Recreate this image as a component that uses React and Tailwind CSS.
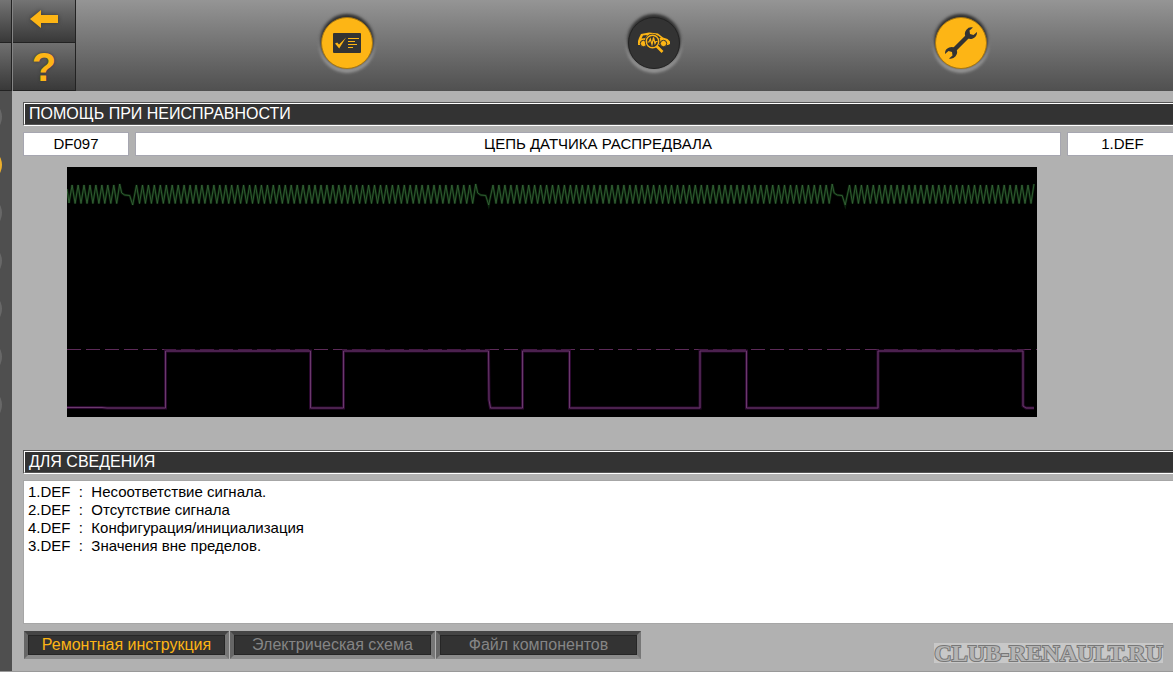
import { useState } from "react"

const codes = [
  { id: "1.DEF", text: "Несоответствие сигнала." },
  { id: "2.DEF", text: "Отсутствие сигнала" },
  { id: "4.DEF", text: "Конфигурация/инициализация" },
  { id: "3.DEF", text: "Значения вне пределов." }
]

const tabs = ["Ремонтная инструкция", "Электрическая схема", "Файл компонентов"]

const steps = [1, 2, 3, 4, 5, 6, 7]

// crankshaft signal: 60 teeth per turn, two of them missing
const buildCrank = () => {
  const pts = []
  const tooth = 5.95
  const addTeeth = (from, count) => {
    for (let i = 0; i < count; i++) {
      const x = from + i * tooth
      pts.push([x, i === count - 1 ? 17 : 18])
      if (i < count - 1) pts.push([x + tooth / 2, 36.5])
    }
  }
  const addGap = (x) => {
    pts.push([x + 2, 26], [x + 5, 28], [x + 10, 28.5], [x + 13, 38])
  }

  pts.push([0, 22], [2, 36])
  addTeeth(5.1, 9)
  addGap(52.7)
  addTeeth(69.5, 58)
  addGap(408.7)
  addTeeth(426, 58)
  addGap(765.2)
  addTeeth(782.5, 32)
  return pts.map((p) => p.map((n) => n.toFixed(1)).join(",")).join(" ")
}

const crank = buildCrank()

const cam =
  "M0 240.5H35L40 241H98.5V184H243.5V241H276.5V184H421.5L422 233L423.5 241H455.5V184H502.5V241H633V184H679.5V241H811V184H956V239L959 241H967"

function Scope() {
  return (
    <svg
      className="block h-[250px] w-full bg-black"
      viewBox="0 0 970 250"
      preserveAspectRatio="none"
      role="img"
      aria-label="Осциллограмма"
    >
      <polyline points={crank} fill="none" stroke="#103814" strokeWidth="2.4" opacity="0.6" />
      <polyline points={crank} fill="none" stroke="#38693a" strokeWidth="0.8" />
      <path d="M0 182.5H970" stroke="#5c2a58" strokeWidth="1" strokeDasharray="14 5" />
      <path d={cam} fill="none" stroke="#2c0830" strokeWidth="3" />
      <path d={cam} fill="none" stroke="#6a3a6c" strokeWidth="1" />
    </svg>
  )
}

function SectionTitle({ children }) {
  return (
    <div className="border border-r-0 border-[#555] border-b-white">
      <h2 className="h-[22px] border-t border-l border-b border-t-white border-l-white border-b-[#555] bg-[#333] pl-1 text-[16px] leading-[20px] text-white">
        {children}
      </h2>
    </div>
  )
}

function ListIcon() {
  return (
    <svg className="h-5 w-7" viewBox="0 0 28 20">
      <rect width="28" height="20" rx="1" fill="#333" />
      <path d="M2 10.5L4.2 9.6L6 11.6L13 4.5L6.2 15.5Z" fill="#fdb515" />
      <path d="M15 5.5H26M15 8.5H22M15 11.5H24M15 14.5H20" stroke="#fdb515" strokeWidth="1" />
    </svg>
  )
}

function CarIcon() {
  return (
    <svg className="h-6 w-8" viewBox="0 0 32 24">
      <path
        d="M0 14V10L1 7L3 3L11 1.5L20 2.5L25 6.5L29.5 8L32 10.5V13L30 14H2Z"
        fill="#fdb515"
      />
      <path d="M3.5 7.5L5 4.5L9 4L7.5 7Z" fill="#333" />
      <path d="M19.5 4L23 7H20Z" fill="#333" />
      <circle cx="5.5" cy="12.5" r="3.2" fill="#fdb515" stroke="#333" />
      <circle cx="25.5" cy="12.5" r="3.2" fill="#fdb515" stroke="#333" />
      <circle cx="14.5" cy="10.5" r="7.8" fill="#333" />
      <circle cx="14.5" cy="10.5" r="6.2" fill="#333" stroke="#fdb515" strokeWidth="1.4" />
      <path d="M9.5 11H11L12.3 8L14 13.5L15.5 6.5L17 12.5L18 10.5H19.5" fill="none" stroke="#fdb515" strokeWidth="1.2" />
      <path d="M18.5 15L24.5 21" stroke="#fdb515" strokeWidth="2.6" />
    </svg>
  )
}

function WrenchIcon() {
  return (
    <svg className="h-8 w-8" viewBox="0 0 32 32">
      <path d="M8 24L24.5 7.5" stroke="#333" strokeWidth="4.4" />
      <path
        d="M28 0.5A6.5 6.5 0 0 0 20.5 9.5A6.5 6.5 0 0 0 32 5L28.5 8L25 7L24.5 3.5Z"
        fill="#333"
      />
      <path
        d="M4 31.5A6.5 6.5 0 0 0 11.5 22.5A6.5 6.5 0 0 0 0 27L3.5 24L7 25L7.5 28.5Z"
        fill="#333"
      />
    </svg>
  )
}

function RoundButton({ label, dark, children }) {
  return (
    <button
      aria-label={label}
      className={`flex size-[52px] items-center justify-center rounded-full border shadow-[0_-2px_3px_1px_#303030,0_2px_3px_2px_#959595] ${
        dark ? "border-[#222] bg-[#333]" : "border-[#a87812] bg-[#fdb515]"
      }`}
    >
      {children}
    </button>
  )
}

function App() {
  const [tab, setTab] = useState(0)

  return (
    <div className="bg-white font-['Liberation_Sans',Arial,sans-serif] text-black">
      <header className="flex h-[91px] bg-linear-to-b from-[#959595] to-[#505050]">
        <div className="flex w-3 flex-col border-r border-[#222]">
          <div className="h-[43px] border-b border-[#222] bg-linear-to-b from-[#747474] to-[#393939]" />
          <div className="h-12 border-b border-[#222] bg-linear-to-b from-[#707070] to-[#393939]" />
        </div>
        <div className="flex w-16 flex-col border-r border-l border-r-[#222] border-l-[#858585]">
          <button
            aria-label="Назад"
            className="flex h-[43px] items-center justify-center border-b border-[#222] bg-linear-to-b from-[#747474] to-[#393939] pb-1"
          >
            <svg className="h-[18px] w-7 drop-shadow-[0_0_2px_#333]" viewBox="0 0 28 18">
              <path d="M0 9L11 0V5H28V13H11V18Z" fill="#fdb515" />
            </svg>
          </button>
          <button
            aria-label="Справка"
            className="flex h-12 items-center justify-center border-b border-[#222] bg-linear-to-b from-[#707070] to-[#393939] text-[40px] leading-[48px] font-bold text-[#fdb515] text-shadow-[0_0_3px_#333]"
          >
            ?
          </button>
        </div>
        <nav className="grid flex-1 grid-cols-3 justify-items-center pt-[17px] pr-[58px] pl-[117px]">
          <RoundButton label="Проверки">
            <ListIcon />
          </RoundButton>
          <RoundButton label="Диагностика" dark>
            <CarIcon />
          </RoundButton>
          <RoundButton label="Ремонт">
            <WrenchIcon />
          </RoundButton>
        </nav>
      </header>

      <div className="flex border-b border-[#999] bg-[#b1b1b1]">
        <aside className="flex w-3 flex-col gap-[14px] overflow-hidden bg-[#4f4f4f] pt-[9px]">
          {steps.map((s) => (
            <div
              key={s}
              className={`-ml-8 size-[34px] shrink-0 rounded-full ${
                s === 2 ? "bg-[#eeb02c]" : "bg-[#686868]"
              }`}
            />
          ))}
        </aside>

        <main className="min-w-0 flex-1 pt-[11px] pb-2 pl-[11px]">
          <SectionTitle>ПОМОЩЬ ПРИ НЕИСПРАВНОСТИ</SectionTitle>

          <div className="mt-[6px] flex gap-[6px] text-center text-[15px] leading-[22px]">
            <div className="w-[106px] border border-[#a6a6b0] bg-white">DF097</div>
            <div className="flex-1 border border-[#a6a6b0] bg-white">ЦЕПЬ ДАТЧИКА РАСПРЕДВАЛА</div>
            <div className="w-[106px] border border-r-0 border-[#a6a6b0] bg-white pl-1">1.DEF</div>
          </div>

          <div className="mt-[11px] mr-[136px] mb-[33px] ml-11">
            <Scope />
          </div>

          <SectionTitle>ДЛЯ СВЕДЕНИЯ</SectionTitle>

          <ul className="mt-[6px] min-h-[144px] border border-r-0 border-[#a6a6a6] bg-white pt-[2px] pl-1 text-[15px] leading-[18px]">
            {codes.map((c) => (
              <li key={c.id} className="whitespace-pre">
                {c.id}  :  {c.text}
              </li>
            ))}
          </ul>

          <div className="mt-[7px] flex items-start justify-between pr-[10px]">
            <div className="flex gap-px pl-px">
              {tabs.map((t, i) => (
                <button
                  key={t}
                  onClick={() => setTab(i)}
                  className={`h-7 w-[205px] border-4 border-t-[#454545] border-r-[#777] border-b-[#8b8b8b] border-l-[#666] bg-[#333] text-[16px] leading-[20px] shadow-[inset_0_0_0_1px_#262626] ${
                    i === tab ? "text-[#fdb515]" : "text-[#858585]"
                  }`}
                >
                  {t}
                </button>
              ))}
            </div>
            <div className="mt-3 h-5 bg-[#c8c8c8] font-['Liberation_Serif',serif] text-[24px] leading-[20px] font-bold text-[#b4b4b4] [-webkit-text-stroke:2px_#777] [paint-order:stroke_fill]">
              CLUB-RENAULT.RU
            </div>
          </div>
        </main>
      </div>
    </div>
  )
}

export default App
